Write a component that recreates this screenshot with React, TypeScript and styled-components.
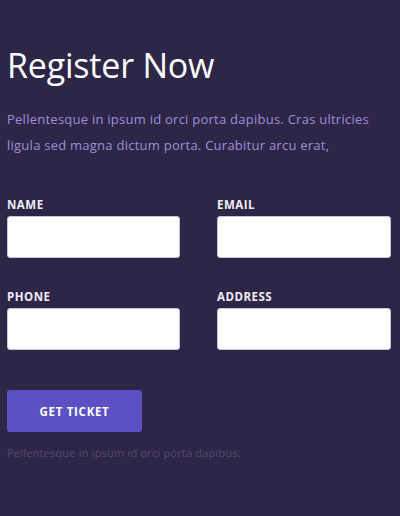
import React from "react";
import styled, { createGlobalStyle } from "styled-components";

const Global = createGlobalStyle`
  html, body { margin: 0; padding: 0; background: #2e2646; }
  body { font-family: "Open Sans", "Noto Sans", sans-serif; }
  * { box-sizing: border-box; }
`;

const Page = styled.section`
  width: 400px;
  min-height: 516px;
  background: #2e2646;
  padding: 43px 7px 0 7px;
`;

const Title = styled.h1`
  margin: 0;
  font-family: "Open Sans", sans-serif;
  font-weight: 400;
  font-size: 34px;
  line-height: 44px;
  color: #ffffff;
  letter-spacing: -0.2px;
`;

const Lead = styled.p`
  margin: 19px 0 0 0;
  font-size: 13px;
  line-height: 26px;
  color: #9d8fdc;
  letter-spacing: 0.25px;
`;

const Form = styled.form`
  margin-top: 41px;
  display: grid;
  grid-template-columns: 173px 174px;
  column-gap: 37px;
  row-gap: 33px;
`;

const Field = styled.label`
  display: flex;
  flex-direction: column;
  gap: 5px;
`;

const LabelText = styled.span`
  font-size: 11.5px;
  font-weight: 700;
  line-height: 12px;
  letter-spacing: 0.5px;
  color: #f1eef8;
  text-transform: uppercase;
`;

const Input = styled.input`
  height: 42px;
  width: 100%;
  border: 1px solid #c9c4d8;
  border-radius: 3px;
  background: #ffffff;
  outline: none;
`;

const Button = styled.button`
  margin-top: 40px;
  width: 135px;
  height: 42px;
  border: none;
  border-radius: 3px;
  background: #5b51c4;
  color: #ffffff;
  font-family: "Open Sans", sans-serif;
  font-weight: 700;
  font-size: 11.5px;
  letter-spacing: 0.7px;
  text-transform: uppercase;
  display: block;
`;

const Note = styled.p`
  margin: 13px 0 0 0;
  font-size: 11px;
  line-height: 16px;
  color: #524a6b;
  letter-spacing: 0.2px;
`;

const fields = ["Name", "Email", "Phone", "Address"];

export default function App() {
  return (
    <>
      <Global />
      <Page>
        <Title>Register Now</Title>
        <Lead>
          Pellentesque in ipsum id orci porta dapibus. Cras ultricies
          <br />
          ligula sed magna dictum porta. Curabitur arcu erat,
        </Lead>
        <Form onSubmit={(e) => e.preventDefault()}>
          {fields.map((f) => (
            <Field key={f}>
              <LabelText>{f}</LabelText>
              <Input type="text" />
            </Field>
          ))}
        </Form>
        <Button type="button">Get Ticket</Button>
        <Note>Pellentesque in ipsum id orci porta dapibus.</Note>
      </Page>
    </>
  );
}
